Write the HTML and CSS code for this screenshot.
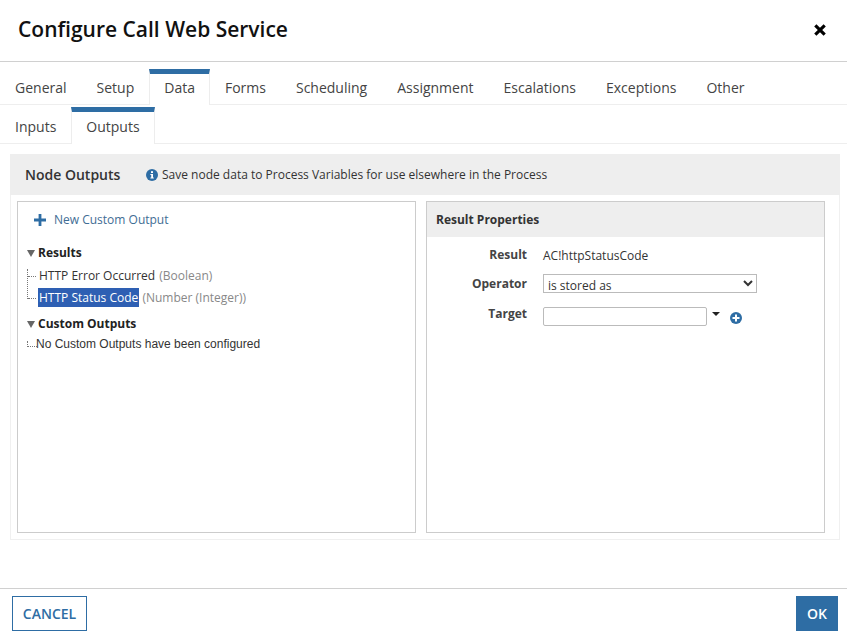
FILE: index.html
```html
<!DOCTYPE html>
<html lang="en">
<head>
<meta charset="utf-8">
<title>Configure Call Web Service</title>
<link rel="stylesheet" href="styles.css">
</head>
<body>
<div class="dialog">
  <header class="head">
    <h1 class="title">Configure Call Web Service</h1>
    <svg class="close" viewBox="0 0 14 14" width="14" height="14" aria-label="Close"><path d="M1.2 3.4 3.4 1.2 7 4.8l3.6-3.6 2.2 2.2L9.2 7l3.6 3.6-2.2 2.2L7 9.2l-3.6 3.6-2.2-2.2L4.8 7z"/></svg>
  </header>
  <nav class="tabs main-tabs">
    <span class="tab">General</span><span class="tab">Setup</span><span class="tab active">Data</span><span class="tab">Forms</span><span class="tab">Scheduling</span><span class="tab">Assignment</span><span class="tab">Escalations</span><span class="tab">Exceptions</span><span class="tab">Other</span>
  </nav>
  <nav class="tabs sub-tabs">
    <span class="tab">Inputs</span><span class="tab active">Outputs</span>
  </nav>
  <main class="content">
    <section class="panel">
      <div class="panel-head">
        <h2 class="panel-title">Node Outputs</h2>
        <svg class="info" viewBox="0 0 12 12" width="12" height="12"><circle cx="6" cy="6" r="6" fill="#2e6da4"/><rect x="5" y="2.2" width="2" height="1.8" fill="#fff"/><path d="M4.4 5h2.6v3.6h.8v1H4.4v-1h.8V6h-.8z" fill="#fff"/></svg>
        <span class="hint">Save node data to Process Variables for use elsewhere in the Process</span>
      </div>
      <div class="columns">
        <div class="box tree-box">
          <div class="new-output">
            <svg viewBox="0 0 12 12" width="12" height="12"><path d="M4.6 0h2.8v4.6H12v2.8H7.4V12H4.6V7.4H0V4.6h4.6z" fill="#2e6da4"/></svg>
            <span>New Custom Output</span>
          </div>
          <div class="group results-group">
            <div class="group-head"><span class="arrow"></span>Results</div>
            <ul class="leaves">
              <li class="leaf"><span class="leaf-name">HTTP Error Occurred</span> <span class="leaf-type">(Boolean)</span></li>
              <li class="leaf"><span class="leaf-name selected">HTTP Status Code</span> <span class="leaf-type">(Number (Integer))</span></li>
            </ul>
          </div>
          <div class="group custom-group">
            <div class="group-head"><span class="arrow"></span>Custom Outputs</div>
            <div class="empty-note">No Custom Outputs have been configured</div>
          </div>
        </div>
        <div class="box props-box">
          <div class="props-head">Result Properties</div>
          <div class="props-grid">
            <span class="prop-label">Result</span>
            <span class="prop-value">AC!httpStatusCode</span>
            <span class="prop-label">Operator</span>
            <select class="operator"><option>is stored as</option></select>
            <span class="prop-label target-label">Target</span>
            <div class="target">
              <input class="target-input" type="text">
              <span class="caret"></span>
              <svg class="add" viewBox="0 0 12 12" width="12" height="12"><circle cx="6" cy="6" r="6" fill="#2e6da4"/><path d="M5 2.5h2V5h2.5v2H7v2.5H5V7H2.5V5H5z" fill="#fff"/></svg>
            </div>
          </div>
        </div>
      </div>
    </section>
  </main>
  <footer class="foot">
    <button class="btn cancel" type="button">CANCEL</button>
    <button class="btn ok" type="button">OK</button>
  </footer>
</div>
</body>
</html>
```
FILE: styles.css
```css
* { box-sizing: border-box; }
html, body { margin: 0; height: 100%; }
body {
  font-family: "Open Sans", sans-serif;
  color: #222;
  background: #fff;
  overflow: hidden;
}
.dialog { width: 847px; height: 636px; display: flex; flex-direction: column; }
.head {
  height: 62px;
  flex: none;
  display: flex;
  align-items: center;
  justify-content: space-between;
  padding: 0 20px 3px 18px;
  border-bottom: 1px solid #d0d0d0;
}
.title { margin: 0; font-size: 21px; font-weight: 600; color: #111; line-height: 30px; }
.close { fill: #000; margin-top: 2px; }
.tabs { display: flex; flex: none; border-bottom: 1px solid #eeeeee; }
.tab {
  font-size: 14px;
  line-height: 19px;
  color: #444;
  padding: 0 15px;
  border-top: 5px solid transparent;
  white-space: nowrap;
}
.tab.active {
  border-top-color: #2e6da4;
  border-left: 1px solid #ededed;
  border-right: 1px solid #ededed;
  padding: 0 14px;
  background: #fff;
  margin-bottom: -1px;
}
.main-tabs { height: 43px; padding-top: 7px; }
.main-tabs .tab { padding-top: 4px; }
.sub-tabs { height: 39px; padding-top: 2px; }
.sub-tabs .tab { padding-top: 5px; }
.content { flex: none; height: 444px; padding: 10px 7px 0 10px; }
.panel {
  height: 386px;
  border: 1px solid #f0f0f0;
  border-top: 0;
  display: flex;
  flex-direction: column;
}
.panel-head {
  height: 41px;
  flex: none;
  background: #eee;
  display: flex;
  align-items: center;
  padding-left: 15px;
  margin: 0 -1px;
}
.panel-title { margin: 0; font-size: 14px; font-weight: 600; color: #333; width: 121px; }
.info { flex: none; }
.hint { font-size: 12px; color: #333; margin-left: 4px; }
.columns { display: flex; flex: 1; padding: 6px 14px 6px 6px; gap: 10px; }
.box { width: 399px; border: 1px solid #ccc; background: #fff; }
.tree-box { padding: 10px 0 0 9px; }
.new-output {
  display: flex;
  align-items: center;
  gap: 8px;
  padding-left: 7px;
  font-size: 12px;
  line-height: 15px;
  color: #3f6d94;
}
.group { font-size: 12px; }
.results-group { margin-top: 18px; }
.custom-group { margin-top: 7px; }
.group-head { font-weight: 700; color: #222; line-height: 16px; display: flex; align-items: center; }
.arrow {
  width: 0; height: 0;
  border-left: 4px solid transparent;
  border-right: 4px solid transparent;
  border-top: 7px solid #666;
  margin-right: 3px;
}
.leaves { list-style: none; margin: 4px 0 0; padding: 0; position: relative; }
.leaves::before { content: ""; position: absolute; left: 0; top: 4px; height: 30px; border-left: 1px dotted #777; }
.leaf { line-height: 22px; height: 22px; padding-left: 11px; position: relative; white-space: nowrap; }
.leaf::before { content: ""; position: absolute; left: 1px; top: 11px; width: 8px; border-top: 1px dotted #777; }
.leaf-name { color: #333; padding: 0 1px; }
.leaf-type { color: #888; }
.selected { background: #2e5fb3; color: #fff; display: inline-block; line-height: 19px; }
.empty-note {
  font-family: "Liberation Sans", sans-serif;
  font-size: 12px;
  line-height: 16px;
  color: #333;
  margin-top: 4px;
  padding-left: 9px;
  position: relative;
}
.empty-note::before { content: ""; position: absolute; left: 0; top: 5px; height: 5px; width: 9px; border-left: 1px dotted #777; border-bottom: 1px dotted #777; }
.props-head {
  height: 35px;
  background: #eee;
  padding-left: 9px;
  font-size: 12px;
  font-weight: 700;
  color: #333;
  line-height: 35px;
}
.props-grid {
  display: grid;
  grid-template-columns: 100px 1fr;
  column-gap: 16px;
  align-items: center;
  font-size: 12px;
  padding-top: 7px;
  grid-template-rows: 22px 35px 31px;
}
.prop-label { text-align: right; font-weight: 700; color: #444; line-height: 16px; }
.target-label { align-self: start; margin-top: 5px; }
.prop-value { color: #333; }
.operator {
  width: 214px;
  height: 19px;
  font-family: "Open Sans", sans-serif;
  font-size: 12px;
  color: #333;
  border: 1px solid #bbb;
  background: #fff;
  padding: 1px 0 0;
}
.target { display: flex; align-items: flex-start; align-self: start; margin-top: 6px; }
.target-input { width: 164px; height: 19px; border: 1px solid #bbb; border-radius: 2px; padding: 0; background: #fff; }
.caret {
  width: 0; height: 0;
  border-left: 4px solid transparent;
  border-right: 4px solid transparent;
  border-top: 4px solid #222;
  margin: 5px 0 0 5px;
}
.add { margin: 5px 0 0 10px; }
.foot {
  flex: none;
  height: 48px;
  border-top: 1px solid #d0d0d0;
  display: flex;
  justify-content: space-between;
  align-items: flex-start;
  padding: 7px 9px 0 12px;
}
.btn {
  height: 35px;
  font-family: "Open Sans", sans-serif;
  font-size: 14px;
  font-weight: 600;
  border: 1px solid #2e6da4;
  border-radius: 0;
  padding: 0;
}
.cancel { width: 75px; background: #fff; color: #2e6da4; }
.ok { width: 42px; background: #2e6da4; color: #fff; }
```
